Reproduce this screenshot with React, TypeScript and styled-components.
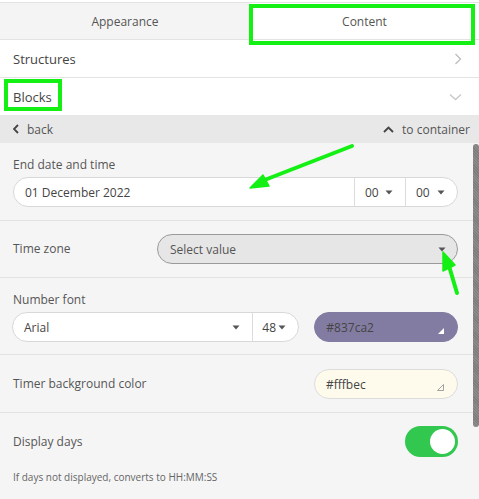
import React from 'react';
import styled, { createGlobalStyle } from 'styled-components';

const Global = createGlobalStyle`
  html, body { margin: 0; padding: 0; background: #fff; }
  body { font-family: "Open Sans", "Noto Sans", sans-serif; color: #444; }
  * { box-sizing: border-box; }
`;

const Page = styled.div`
  position: relative;
  width: 479px;
  height: 499px;
  overflow: hidden;
  padding-top: 2px;
  background: #fff;
`;

const Tabs = styled.div`
  display: grid;
  grid-template-columns: 250px 1fr;
  height: 38px;
  border-top: 1px solid #e3e3e3;
  border-bottom: 1px solid #e3e3e3;
`;

const Tab = styled.div<{ $active?: boolean }>`
  display: flex;
  align-items: center;
  justify-content: center;
  font-size: 12px;
  color: #555;
  background: ${p => (p.$active ? '#fff' : '#f4f4f4')};
`;

const NavRow = styled.div<{ $border?: boolean }>`
  display: flex;
  align-items: center;
  justify-content: space-between;
  height: ${p => (p.$border ? 38 : 37)}px;
  padding: 0 17px 0 13px;
  font-size: 13px;
  color: #444;
  border-bottom: ${p => (p.$border ? '1px solid #e3e3e3' : 'none')};
`;

const BackBar = styled.div`
  display: flex;
  align-items: center;
  justify-content: space-between;
  height: 28px;
  padding: 0 9px 0 13px;
  background: #e8e8e8;
  font-size: 12px;
  color: #555;
`;

const BarLink = styled.span`
  display: flex;
  align-items: center;
  gap: 8px;
`;

const Body = styled.div`
  display: flex;
  height: 356px;
  background: #f5f5f5;
`;

const Sections = styled.div`
  flex: 1;
  min-width: 0;
`;

const Track = styled.div`
  width: 6px;
  padding-top: 1px;
`;

const Thumb = styled.div`
  height: 283px;
  border-radius: 3px;
  background: repeating-linear-gradient(45deg, #8c8c8c 0 1px, #7d7d7d 1px 2px);
`;

const Section = styled.div<{ $pt: number; $pb: number }>`
  padding: ${p => p.$pt}px 15px ${p => p.$pb}px 13px;
  border-bottom: 1px solid #e2e2e2;
`;

const LastSection = styled.div`
  padding: 13px 15px 0 13px;
`;

const Label = styled.div`
  font-size: 12px;
  line-height: 20px;
  color: #555;
`;

const StackLabel = styled(Label)`
  margin-bottom: 2px;
`;

const InlineRow = styled.div`
  display: flex;
  align-items: center;
  justify-content: space-between;
`;

const Group = styled.div<{ $w?: string }>`
  display: flex;
  height: 30px;
  width: ${p => p.$w || '100%'};
  background: #fff;
  border: 1px solid #d8d8d8;
  border-radius: 15px;
  overflow: hidden;
`;

const Field = styled.div<{ $w?: number; $divider?: boolean; $pl?: number }>`
  display: flex;
  align-items: center;
  justify-content: space-between;
  ${p => (p.$w ? `width: ${p.$w}px; flex: none;` : 'flex: 1;')}
  padding: 0 12px 0 ${p => p.$pl ?? 12}px;
  font-size: 12px;
  color: #444;
  border-left: ${p => (p.$divider ? '1px solid #dcdcdc' : 'none')};
`;

const Select = styled.div`
  display: flex;
  align-items: center;
  justify-content: space-between;
  width: 301px;
  height: 30px;
  padding: 0 11px 0 12px;
  background: #e6e6e6;
  border: 1px solid #9a9a9a;
  border-radius: 15px;
  font-size: 12px;
  color: #555;
`;

const FontRow = styled.div`
  display: flex;
  align-items: center;
  gap: 15px;
  margin-left: -1px;
`;

const ColorInput = styled.div<{ $bg: string; $border: string }>`
  position: relative;
  display: flex;
  align-items: center;
  width: 144px;
  height: 30px;
  padding-left: 11px;
  background: ${p => p.$bg};
  border: 1px solid ${p => p.$border};
  border-radius: 15px;
  font-size: 12px;
  color: #444;
`;

const Corner = styled.svg`
  position: absolute;
  right: 13px;
  bottom: 7px;
`;

const Toggle = styled.div`
  display: flex;
  align-items: center;
  justify-content: flex-end;
  width: 53px;
  height: 31px;
  padding: 3px;
  border-radius: 16px;
  background: #32c74f;
`;

const Knob = styled.div`
  width: 25px;
  height: 25px;
  border-radius: 50%;
  background: #fff;
`;

const Hint = styled.div`
  margin-top: 12px;
  font-size: 10px;
  line-height: 16px;
  color: #666;
`;

const Highlight = styled.div<{ $x: number; $y: number; $w: number; $h: number }>`
  position: absolute;
  left: ${p => p.$x}px;
  top: ${p => p.$y}px;
  width: ${p => p.$w}px;
  height: ${p => p.$h}px;
  border: 4px solid #14f014;
  pointer-events: none;
`;

const Overlay = styled.svg`
  position: absolute;
  left: 0;
  top: 0;
  pointer-events: none;
`;

const Caret = () => (
  <svg width="8" height="5" viewBox="0 0 8 5"><path d="M0.5 0.5h7L4 4.5z" fill="#555" /></svg>
);

const ChevronRight = () => (
  <svg width="8" height="12" viewBox="0 0 8 12"><path d="M1.5 1l5 5-5 5" fill="none" stroke="#bdbdbd" strokeWidth="1.3" /></svg>
);

const ChevronDown = () => (
  <svg width="13" height="8" viewBox="0 0 13 8"><path d="M1 1.5l5.5 5 5.5-5" fill="none" stroke="#c8c8c8" strokeWidth="1.3" /></svg>
);

const BackIcon = () => (
  <svg width="6" height="10" viewBox="0 0 6 10"><path d="M5 1L1 5l4 4" fill="none" stroke="#444" strokeWidth="1.8" /></svg>
);

const UpIcon = () => (
  <svg width="11" height="7" viewBox="0 0 11 7"><path d="M1 6l4.5-4.5L10 6" fill="none" stroke="#444" strokeWidth="1.8" /></svg>
);

export default function App() {
  return (
    <Page>
      <Global />
      <Tabs>
        <Tab>Appearance</Tab>
        <Tab $active>Content</Tab>
      </Tabs>
      <NavRow $border>
        <span>Structures</span>
        <ChevronRight />
      </NavRow>
      <NavRow>
        <span>Blocks</span>
        <ChevronDown />
      </NavRow>
      <BackBar>
        <BarLink><BackIcon />back</BarLink>
        <BarLink><UpIcon />to container</BarLink>
      </BackBar>
      <Body>
        <Sections>
          <Section $pt={12} $pb={13}>
            <StackLabel>End date and time</StackLabel>
            <Group>
              <Field $pl={11}>01 December 2022</Field>
              <Field $w={51} $divider $pl={10}>00 <Caret /></Field>
              <Field $w={52} $divider $pl={10}>00 <Caret /></Field>
            </Group>
          </Section>
          <Section $pt={13} $pb={13}>
            <InlineRow>
              <Label>Time zone</Label>
              <Select>Select value <Caret /></Select>
            </InlineRow>
          </Section>
          <Section $pt={12} $pb={12}>
            <StackLabel>Number font</StackLabel>
            <FontRow>
              <Group $w="288px">
                <Field $pl={11}>Arial <Caret /></Field>
                <Field $w={46} $divider $pl={9}>48 <Caret /></Field>
              </Group>
              <ColorInput $bg="#837ca2" $border="#837ca2">
                #837ca2
                <Corner width="6" height="6" viewBox="0 0 6 6"><path d="M6 0v6H0z" fill="#fff" /></Corner>
              </ColorInput>
            </FontRow>
          </Section>
          <Section $pt={14} $pb={13}>
            <InlineRow>
              <Label>Timer background color</Label>
              <ColorInput $bg="#fffbec" $border="#dcdcdc">
                #fffbec
                <Corner width="7" height="7" viewBox="0 0 7 7"><path d="M6.5 0.5v6h-6z" fill="none" stroke="#999" strokeWidth="0.9" /></Corner>
              </ColorInput>
            </InlineRow>
          </Section>
          <LastSection>
            <InlineRow>
              <Label>Display days</Label>
              <Toggle><Knob /></Toggle>
            </InlineRow>
            <Hint>If days not displayed, converts to HH:MM:SS</Hint>
          </LastSection>
        </Sections>
        <Track><Thumb /></Track>
      </Body>
      <Highlight $x={249} $y={4} $w={226} $h={41} />
      <Highlight $x={4} $y={79} $w={58} $h={32} />
      <Overlay width="479" height="499" viewBox="0 0 479 499">
        <path d="M352 146L262 181" stroke="#14f014" strokeWidth="4" strokeLinecap="round" />
        <path d="M250 188L263 175L269 186z" fill="#14f014" stroke="#14f014" strokeWidth="1.5" strokeLinejoin="round" />
        <path d="M457 293L449 266" stroke="#14f014" strokeWidth="4" strokeLinecap="round" />
        <path d="M443 252L443 271L455 265z" fill="#14f014" stroke="#14f014" strokeWidth="1.5" strokeLinejoin="round" />
      </Overlay>
    </Page>
  );
}
